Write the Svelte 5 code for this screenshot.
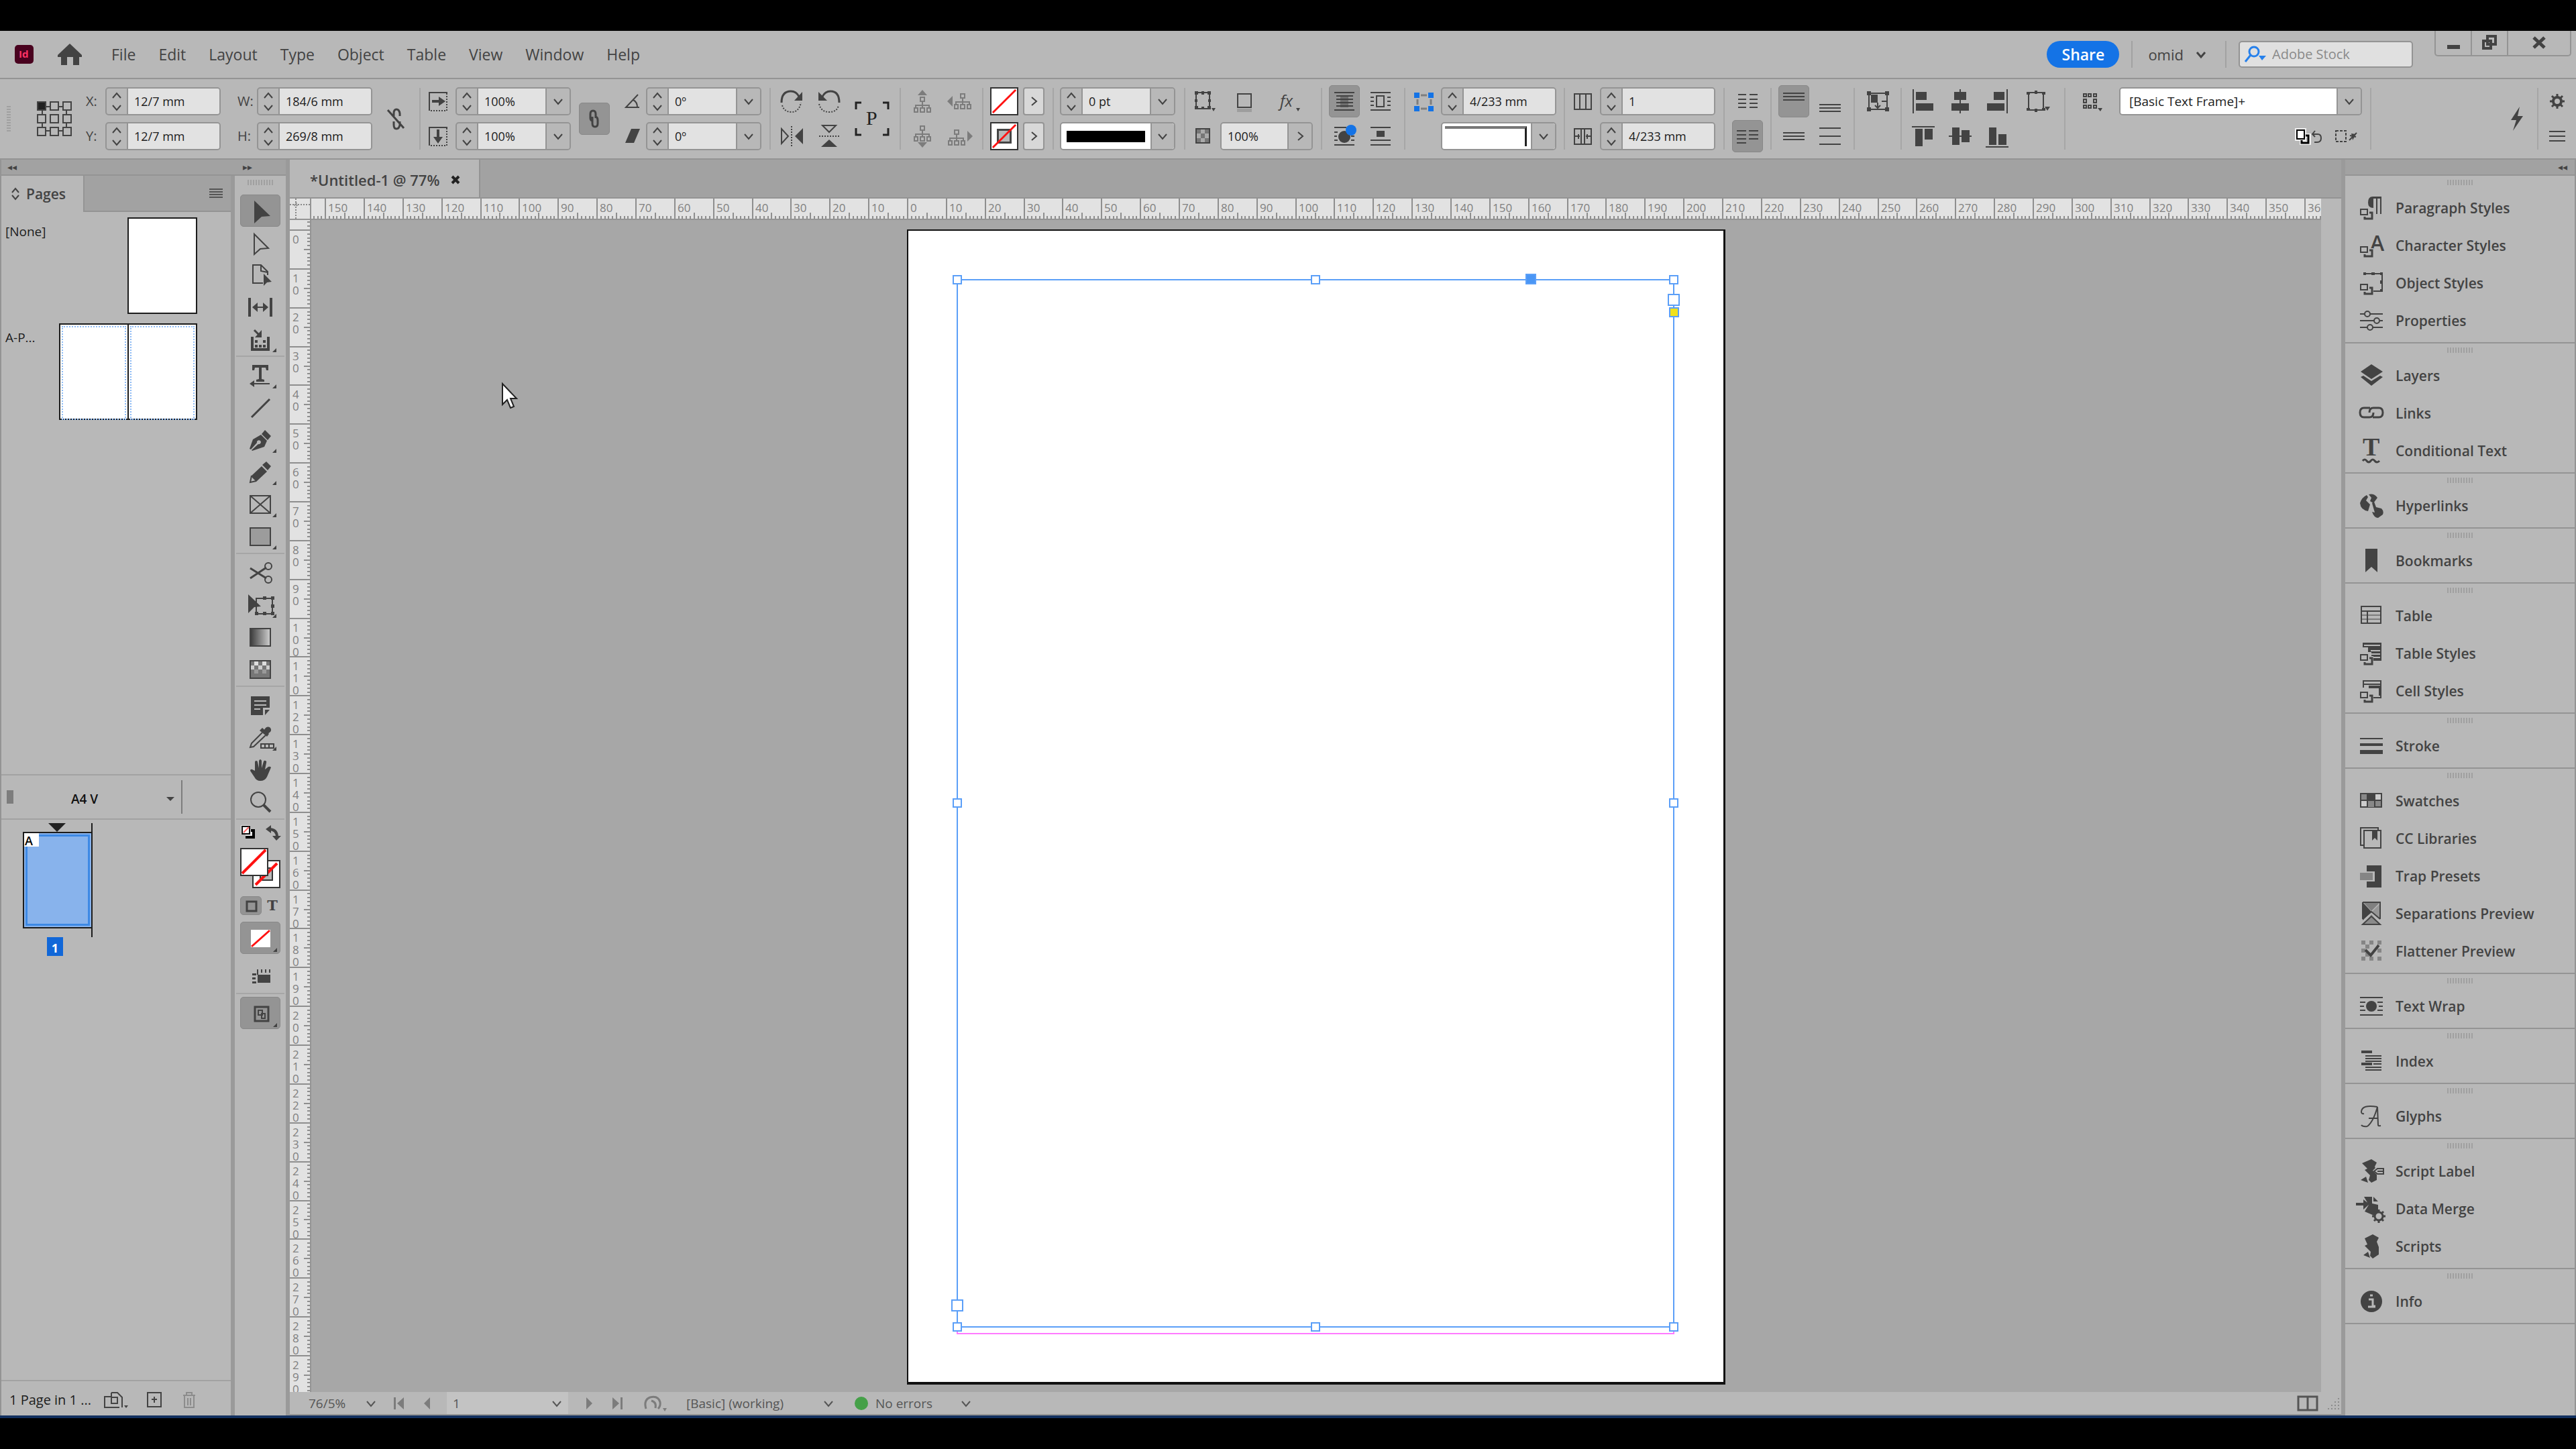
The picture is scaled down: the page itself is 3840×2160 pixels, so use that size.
<script>
  const MM = 5.786;
  const PAGE_BOX = 1220;

  let canvasW = $state(2996);
  let canvasH = $state(1748);

  const originX = $derived(Math.round((canvasW - PAGE_BOX) / 2) + 1);
  const originY = 15;

  function ticks(origin, size) {
    const out = [];
    for (let n = Math.ceil(-origin / MM); origin + n * MM < size + 2; n++) {
      out.push({ n, at: Math.round(origin + n * MM) });
    }
    return out;
  }

  const start = (n) => (n % 10 === 0 ? 0 : n % 5 === 0 ? 21 : 26);
  const hTicks = $derived(ticks(originX, canvasW));
  const vTicks = $derived(ticks(originY, canvasH));
  const hPath = $derived(hTicks.map((t) => `M${t.at} ${start(t.n)}V30`).join(''));
  const vPath = $derived(vTicks.map((t) => `M${start(t.n)} ${t.at}H30`).join(''));

  const menus = ['File', 'Edit', 'Layout', 'Type', 'Object', 'Table', 'View', 'Window', 'Help'];

  const line = (d, w = 2, extra = '') => `<path d="${d}" fill="none" stroke="currentColor" stroke-width="${w}" ${extra}/>`;
  const solid = (d, extra = '') => `<path d="${d}" ${extra}/>`;
  const letter = (t, x, y, size, extra = '') => `<text x="${x}" y="${y}" font-size="${size}" ${extra}>${t}</text>`;
  const SERIF = 'font-family="Liberation Serif, serif" font-weight="700"';
  const dots = 'stroke-dasharray="2 2"';

  const badge = solid('M2 19h14v5h7v14H8v-6H2z', 'fill="#b8b8b8"')
    + line('M4 22h10v8H4z') + line('M17 27h4v9H10v-3', 3);
  const tree = (x, y) => line(`M${x} ${y + 7}v10M${x - 10} ${y + 17}v-5h20v5`)
    + line(`M${x - 3} ${y}h6v6h-6zM${x - 12} ${y + 16}h5v6h-5zM${x - 3} ${y + 16}h6v6h-6zM${x + 7} ${y + 16}h5v6h-5z`);

  // drawn in 60 x 48 cells
  const tools = [
    [
      { name: 'Selection Tool', on: true, art: solid('M20 8L44 31 31 32 20 42z') },
      { name: 'Direct Selection Tool', art: line('M21 11L42 32 30 33 21 41z') },
      { name: 'Page Tool', art: line('M34 36H19V9h12l10 10v5M31 9v9l10 2') + solid('M35 22l12 12-7 1-5 5z') },
      { name: 'Gap Tool', art: line('M14 10v28M46 10v28', 4) + line('M22 24h16') + solid('M18 24l8-7v14zM42 24l-8-7v14z') },
      { name: 'Content Collector Tool', more: true, art: line('M18 20v19h24V20', 4) + solid('M22 25h4v4h-4zM34 25h4v4h-4zM22 32h4v4h-4zM28 32h4v4h-4zM34 32h4v4h-4z') + line('M21 10l7 7', 3) + solid('M32 21V10L22 21z') }
    ],
    [
      { name: 'Type Tool', more: true, art: solid('M18 8h24v8h-3l-1-4h-6v17l4 1v3H24v-3l4-1V12h-6l-1 4h-3z') + line('M18 36h26') + solid('M14 36l7-5v10z') },
      { name: 'Line Tool', art: line('M17 38L44 11', 3) },
      { name: 'Pen Tool', more: true, art: solid('M37 9l9 9-5 6-9-9zM31 16l9 9-4 9-18 6-1-1 10-9a3 3 0 1 0-2-2L16 38l-2-1 5-14z') },
      { name: 'Pencil Tool', more: true, art: solid('M39 8l7 7-5 6-8-8zM32 15l8 8-16 15-8-8z') + line('M17 29l-2 10 9-2') },
      { name: 'Rectangle Frame Tool', more: true, art: line('M15 11h30v26H15z') + line('M15 11l30 26M45 11L15 37') },
      { name: 'Rectangle Tool', more: true, art: '<rect x="15" y="11" width="30" height="26" fill="#9c9c9c" stroke="currentColor" stroke-width="2"/>' }
    ],
    [
      { name: 'Scissors Tool', art: line('M15 17l24 15M15 32l24-16', 3) + '<circle cx="42" cy="14" r="5" fill="none" stroke="currentColor" stroke-width="2"/><circle cx="42" cy="34" r="5" fill="none" stroke="currentColor" stroke-width="2"/>' },
      { name: 'Free Transform Tool', more: true, art: line('M24 14h24v23H24z') + solid('M12 8l19 18-10 1-9 9zM34 11h5v5h-5zM46 11h5v5h-5zM46 23h5v5h-5zM46 34h5v5h-5zM34 34h5v5h-5zM22 34h5v5h-5z') },
      { name: 'Gradient Swatch Tool', art: '<rect x="15" y="11" width="30" height="26" fill="url(#fade)" stroke="currentColor" stroke-width="2"/>' },
      { name: 'Gradient Feather Tool', art: '<rect x="15" y="11" width="30" height="26" fill="#777" stroke="currentColor" stroke-width="2"/>' + solid('M21 12h6v6h-6zM33 12h6v6h-6z', 'fill="#ddd"') + solid('M16 18h5v6h-5zM27 18h6v6h-6zM39 18h5v6h-5z', 'fill="#ccc"') + solid('M21 24h6v6h-6zM33 24h6v6h-6z', 'fill="#999"') }
    ],
    [
      { name: 'Note Tool', art: solid('M16 10h28v17H34v11H16zM37 30h7l-7 8z') + '<path d="M21 17h18M21 23h18M21 29h9" stroke="#b8b8b8" stroke-width="2"/>' },
      { name: 'Eyedropper Tool', more: true, art: line('M33 16L17 32l-2 6 5-1 18-17') + solid('M33 9l10 9-3 4-11-9zM38 9a4 4 0 0 1 7 6l-4 3-6-5z') + line('M31 33h19v6H31zM37 33v6M43 33v6') },
      { name: 'Hand Tool', art: solid('M22 25V12q0-2 2-2t2 2l2 9V10q1-2 2-2t2 2v11l3-10q1-2 3-1t1 3l-2 10 5-4q3-1 4 1L40 34q-3 6-10 6-6 0-9-6l-6-9q0-3 3-2z') },
      { name: 'Zoom Tool', art: '<circle cx="27" cy="20" r="11" fill="none" stroke="currentColor" stroke-width="2"/>' + line('M35 28l10 10', 4) }
    ]
  ];

  // drawn in 40 x 40 cells
  const panels = [
    [
      { name: 'Paragraph Styles', art: solid('M22 3h13v3H23v14q-8 0-8-8 0-9 7-9z') + line('M28 4v25M34 4v25') + badge },
      { name: 'Character Styles', art: letter('A', 18, 28, 32) + badge },
      { name: 'Object Styles', art: line('M10 6h26v26H16') + solid('M8 4h4v4H8zM20 4h5v4h-5zM33 4h4v4h-4zM33 16h4v5h-4zM33 29h4v4h-4z') + badge },
      { name: 'Properties', art: line('M3 10h7M18 10h19M3 20h22M33 20h4M3 30h11M22 30h15') + '<g fill="none" stroke="currentColor" stroke-width="2"><circle cx="14" cy="10" r="4"/><circle cx="28" cy="20" r="4"/><circle cx="18" cy="30" r="4"/></g>' }
    ],
    [
      { name: 'Layers', art: solid('M20 3l17 11-17 11L4 14zM4 22l4-2 12 8 13-8 4 2-17 13z') },
      { name: 'Links', art: '<g fill="none" stroke="currentColor" stroke-width="3"><path d="M18 12H9q-6 0-6 7t6 7h8q6 0 6-7"/><path d="M22 26h9q6 0 6-7t-6-7h-8q-6 0-6 7"/></g>' },
      { name: 'Conditional Text', art: letter('T', 7, 27, 38, SERIF) + line('M7 35q3-4 6 0t6 0 6 0 7 0', 3) }
    ],
    [
      { name: 'Hyperlinks', art: solid('M3 16q2-8 10-12l2 3-3 5 6 6-3 10Q4 26 3 16zM16 3q8-2 13 5l-6 8-5-3 2-5zM24 14l3 8 8 2q4 4 2 9l-7 5q-6 0-9-9l4 1-4-14z') }
    ],
    [{ name: 'Bookmarks', art: solid('M11 2h18v35l-9-8-9 8z') }],
    [
      { name: 'Table', art: line('M5 6h29v25H5zM5 13h29M14 13v18') + line('M14 19h20M14 25h20M5 19h9M5 25h9', 1) },
      { name: 'Table Styles', art: solid('M7 4h28v27H20V18h-5V11H7z') + '<path d="M9 8h24M19 16h14M19 21h14M19 26h14" stroke="#b8b8b8" stroke-width="2"/>' + badge },
      { name: 'Cell Styles', art: line('M8 15V5h26v25H20') + line('M8 10h26') + line('M16 14h17v13', 4) + badge }
    ],
    [{ name: 'Stroke', art: line('M3 9h34', 2) + line('M3 18h34', 4) + line('M3 29h34', 6) }],
    [
      { name: 'Swatches', art: '<rect x="4" y="9" width="31" height="20" fill="#ccc" stroke="currentColor" stroke-width="2"/>' + solid('M14 9h11v10H14z') + solid('M5 10h9v9H5zM14 19h11v10H14zM25 19h9v9h-9z', 'fill="#888"') + line('M5 19h30M14 9v20M25 9v20') },
      { name: 'CC Libraries', art: line('M8 30H4V4h26v4M9 8h25v26H9z') + solid('M21 8h8v15l-4-4-4 4z') },
      { name: 'Trap Presets', art: solid('M13 4h22v33H13v-9h12V13H13z') + solid('M3 15h19v11H3z', 'fill="#858585"') },
      { name: 'Separations Preview', art: solid('M7 3l13 14L7 30z') + solid('M9 4h23L20 16z', 'fill="#808080"') + solid('M33 5v24L21 17z', 'fill="#969696"') + solid('M20 21l13 15H8z', 'fill="#8a8a8a"') + line('M7 3h26v25M7 3v25M7 28l13-11 13 11M7 36h26L20 24z') },
      { name: 'Flattener Preview', art: solid('M5 4h6v6H5zM17 4h6v6h-6zM29 4h6v6h-6zM11 10h6v6h-6zM5 16h6v6H5zM29 16h6v6h-6zM11 22h6v6h-6zM5 28h6v6H5zM17 28h6v6h-6zM29 28h6v6h-6z', 'fill="#858585"') + line('M11 18l8 8 12-15', 4) }
    ],
    [{ name: 'Text Wrap', art: line('M3 7h34M3 14h8M29 14h8M3 20h6M31 20h6M3 26h8M29 26h8M3 33h34') + '<circle cx="20" cy="20" r="8"/>' }],
    [{ name: 'Index', art: line('M5 6h16M5 24h16', 4) + line('M11 12h24M11 16h24M11 20h24M23 24h12M11 29h24M11 33h24') }],
    [{ name: 'Glyphs', art: line('M14 35q-7 1-9-2M14 35Q23 28 29 6l1 27q0 2 4 1M29 6Q6 2 5 13q0 4 4 3M16 23h13') }],
    [
      { name: 'Script Label', art: solid('M6 8l14-6 8 5-3 6 3 8v12l-8 4-4-4 2-7-8-8 4-2zM4 33l8-5 3 9z') + solid('M22 19l6-6h12v12H28z', 'fill="#b8b8b8"') + line('M24 20l5-4h9v8h-9zM29 20h9') },
      { name: 'Data Merge', art: line('M-3 13h12', 4) + solid('M8 6l9 7-9 8zM9 2h12v10l9 2v12l-6 4-14-6 6-10zM23 2l7 7h-7z') + '<circle cx="31" cy="31" r="6" fill="#b8b8b8" stroke="currentColor" stroke-width="3"/>' + line('M31 21v4M31 37v4M21 31h4M37 31h4M24 24l3 3M35 35l3 3M38 24l-3 3M27 35l-3 3', 3) },
      { name: 'Scripts', art: solid('M10 8l12-6 9 5-3 6 3 8v11l-9 6-4-4 1-6-9-9 4-2zM8 33l7-5 3 9z') }
    ],
    [{ name: 'Info', art: '<circle cx="20" cy="20" r="16"/><path d="M16 17h6v10h4M15 28h11M18 11h4" fill="none" stroke="#b8b8b8" stroke-width="3"/>' }]
  ];

  const ctl = {
    scaleX: line('M34 7H7v27') + line('M33 8v26H8', 2, dots) + line('M11 20h12', 4) + solid('M21 13l10 7-10 7z'),
    scaleY: line('M34 7H7v27') + line('M33 8v26H8', 2, dots) + line('M20 10v13', 4) + solid('M13 21l7 10 7-10z'),
    angle: line('M29 10L11 29h20M22 18q6 3 6 11'),
    shear: solid('M19 9h13l-9 21H10z'),
    cw: line('M4 22Q4 5 18 5q8 0 12 8', 3) + solid('M35 6v13H23z') + line('M5 26q3 10 14 10t14-14', 2, dots),
    ccw: line('M35 22Q35 5 22 5q-8 0-12 8', 3) + solid('M4 6v13h13z') + line('M5 24q3 12 15 12t14-10', 2, dots),
    flipH: line('M4 9v22l10-11z') + solid('M36 8v24L24 20z') + line('M19 5v31', 2, dots),
    flipV: line('M10 4h20L20 14z') + solid('M8 36h24L20 25z') + line('M5 20h31', 2, dots),
    upTree: solid('M20 3l7 8H13z') + tree(20, 14),
    downTree: tree(20, 5) + solid('M20 37l7-8H13z'),
    leftTree: solid('M2 20l8-8v16z') + tree(25, 9),
    rightTree: tree(16, 11) + solid('M40 20l-8-8v16z'),
    corner: line('M10 7h20v24H10z') + solid('M8 5h5v5H8zM18 5h4v5h-4zM27 5h5v5h-5zM8 17h4v4H8zM28 17h4v4h-4zM8 27h5v5H8zM18 28h4v4h-4zM27 27h5v5h-5zM33 30h6l-3 5z'),
    shadow: line('M10 9h20v20H10z') + solid('M9 31h22v5H9z', 'fill="#9d9d9d"'),
    fx: letter('fx', 4, 28, 24, 'font-style="italic"') + solid('M28 30h6l-3 5z'),
    opacity: '<rect x="10" y="9" width="20" height="21" fill="#aaa" stroke="currentColor" stroke-width="2"/>' + solid('M11 10h6v6h-6zM23 10h6v6h-6zM17 16h6v7h-6zM11 23h6v6h-6zM23 23h6v6h-6z', 'fill="#777"'),
    wrapNone: line('M5 7h30M5 33h30M8 12h25M8 17h25M8 22h25M8 27h25') + solid('M14 11h12v18H14z', 'opacity=".45"'),
    wrapBox: line('M5 7h30M5 33h30M5 14h5M5 20h5M5 26h5M30 14h5M30 20h5M30 26h5') + line('M14 12h11v16H14z'),
    wrapShape: line('M5 7h18M5 14h5M5 20h4M5 26h5M30 20h5M30 26h5M5 33h30') + '<circle cx="20" cy="21" r="9"/><circle cx="30" cy="11" r="8" fill="#1473e6"/>',
    wrapJump: line('M5 7h30M5 26h30M5 33h30') + solid('M14 12h12v9H14z'),
    corners: solid('M6 7h8v8H6zM27 7h8v8h-8zM6 27h8v8H6zM27 27h8v8h-8z', 'fill="#1473e6"') + line('M16 11h9M16 31h9M11 17v8M31 17v8', 3, 'opacity=".5"'),
    cols: line('M8 9h25v23H8zM16 9v23M25 9v23'),
    gutter: line('M8 9h25v23H8zM18 9v23M23 9v23M8 20h8M25 20h8M14 17v7M27 17v7'),
    colText: line('M6 10h12M6 17h12M6 23h12M6 29h12M23 10h12M23 17h12M23 23h12M23 29h12'),
    colBal: line('M4 12h14M4 18h14M4 24h14M4 30h14M22 12h14M22 18h14M22 24h14'),
    vTop: line('M4 8h32M4 13h32M4 18h32'),
    vBottom: line('M4 25h32M4 30h32M4 35h32'),
    vMiddle: line('M4 15h32M4 20h32M4 25h32'),
    vJustify: line('M4 8h32M4 20h32M4 32h32'),
    fit: line('M7 8h27v24H7z') + solid('M10 10h10v12H10zM4 5h6v6H4zM31 5h6v6h-6zM4 29h6v6H4zM31 29h6v6h-6z') + line('M20 22v8M26 20h7M16 26l4 4 4-4'),
    alignL: line('M5 2v36') + solid('M9 6h16v12H9zM9 23h26v11H9z'),
    alignC: line('M20 2v36') + solid('M11 6h18v12H11zM7 23h26v11H7z'),
    alignR: line('M35 2v36') + solid('M15 6h16v12H15zM5 23h26v11H5z'),
    alignT: line('M3 6h34') + solid('M8 9h11v26H8zM22 9h12v16H22z'),
    alignM: line('M3 20h34') + solid('M8 7h11v26H8zM22 11h12v18H22z'),
    alignB: line('M3 36h34') + solid('M8 7h11v26H8zM22 17h12v16H22z'),
    bounds: line('M8 7h22v26H8z') + solid('M5 6h5v4H5zM17 4h4v5h-4zM28 6h5v4h-5zM5 30h5v4H5zM17 31h4v5h-4zM28 30h5v4h-5zM32 28h8l-4 6z'),
    objStyle: line('M7 9h4v4H7zM14 9h4v4h-4zM22 9h4v4h-4zM7 17h4v5H7zM22 17h4v5h-4zM7 26h4v4H7zM14 26h4v4h-4zM22 26h4v4h-4z') + solid('M28 30h7l-3 5z'),
    clear: '<g fill="none" stroke="#eee" stroke-width="6"><path d="M2 11h11v13H2zM15 19h5v11H9v-4"/></g><rect x="2" y="11" width="11" height="13" fill="#fff" stroke="#000" stroke-width="2"/><path d="M15 19h4v11H9v-4" fill="none" stroke="#000" stroke-width="3"/>' + line('M25 17h8q5 0 5 6t-6 6h-4M29 12l-4 5 4 4'),
    override: line('M4 12h15v16H4z', 2, 'stroke-dasharray="4 2"') + line('M24 26l11-11M25 19l9 2') + solid('M27 16l7 1-5 9z'),
    bolt: solid('M24 2L11 22h8l-5 16 15-22h-8z'),
    gear: '<circle cx="20" cy="20" r="6" fill="none" stroke="currentColor" stroke-width="4"/>' + line('M20 9v4M20 27v4M9 20h4M27 20h4M12 12l3 3M25 25l3 3M28 12l-3 3M15 25l-3 3', 3),
    menu: line('M8 13h24M8 20h24M8 27h24'),
    unlink: line('M17 16v-4q0-6 4-6t5 6v4M17 24v5q0 6 4 6t5-6v-5M8 7l24 27', 3),
    link: line('M22 19v-6q0-5-4-5t-4 5v6q0 4 4 4M17 17v10q0 5 4 5t4-5v-5q0-4-3-5', 3)
  };

  const aligns = [
    [ctl.alignL, 'Align left edges'], [ctl.alignC, 'Align horizontal centers'], [ctl.alignR, 'Align right edges'], [ctl.bounds, 'Align to'],
    [ctl.alignT, 'Align top edges'], [ctl.alignM, 'Align vertical centers'], [ctl.alignB, 'Align bottom edges']
  ];

  const handles = [[73, 73], [607, 73], [1141, 73], [73, 853], [1141, 853], [73, 1634], [607, 1634], [1141, 1634]];
</script>

{#snippet icon(art)}
  <svg class="ic" viewBox="0 0 40 40" aria-hidden="true">{@html art}</svg>
{/snippet}

{#snippet act(art, label, on = false)}
  <button type="button" class="act" class:on aria-label={label}>{@render icon(art)}</button>
{/snippet}

{#snippet chevron(d = 'M-6 -3L0 4 6 -3')}
  <svg class="chev" viewBox="-8 -8 16 16" aria-hidden="true"><path {d} /></svg>
{/snippet}

{#snippet arrows()}
  <span class="spin">
    <button type="button" aria-label="Increase">{@render chevron('M-6 4L0 -3 6 4')}</button>
    <button type="button" aria-label="Decrease">{@render chevron()}</button>
  </span>
{/snippet}

{#snippet field(id, label, value, drop = false)}
  <div class="field">
    {@render arrows()}
    <input {id} aria-label={label} {value} />
    {#if drop}<button type="button" class="drop" aria-label={`${label} presets`}>{@render chevron()}</button>{/if}
  </div>
{/snippet}

{#snippet slash()}
  <svg viewBox="0 0 40 40" class="slash" aria-hidden="true"><path d="M2 38L38 2" /></svg>
{/snippet}

<div class="screen">
  <div class="app">
    <header class="menubar">
      <svg class="logo" viewBox="0 0 28 28" aria-hidden="true">
        <rect width="28" height="28" rx="5" fill="#49021f" />
        <text x="6" y="19" font-size="15" font-weight="700" fill="#ff3366">Id</text>
      </svg>
      <button type="button" class="home" aria-label="Home">
        <svg viewBox="0 0 36 32"><path d="M18 0L36 17v3h-4v12h-9V20h-9v12H5V20H0v-3z" /></svg>
      </button>
      <nav>
        {#each menus as m}<button type="button">{m}</button>{/each}
      </nav>
      <div class="account">
        <button type="button" class="share">Share</button>
        <button type="button" class="user">omid {@render chevron()}</button>
        <label class="search">
          <svg viewBox="0 0 34 26" aria-hidden="true"><circle cx="15" cy="9" r="7" /><path d="M10 14L2 24" /><path class="tri" d="M22 15h11l-6 7z" /></svg>
          <input type="search" placeholder="Adobe Stock" aria-label="Search Adobe Stock" />
        </label>
        <div class="win">
          <button type="button" aria-label="Minimize"><svg viewBox="0 0 40 30"><path d="M11 18h19v6H11z" /></svg></button>
          <button type="button" aria-label="Restore"><svg viewBox="0 0 40 30"><path d="M17 5h12v12H17zM11 12h11v11H11z" fill="none" stroke="currentColor" stroke-width="4" /></svg></button>
          <button type="button" aria-label="Close" class="close"><svg viewBox="0 0 40 30"><path d="M12 7l16 15M28 7L12 22" stroke="currentColor" stroke-width="5" /></svg></button>
        </div>
      </div>
    </header>

    <section class="control">
      <div class="grp g-pos">
        <span class="vgrip"></span>
        <svg class="ref" viewBox="0 0 52 52" aria-hidden="true">
          <path d="M8 8h36v36H8z" />
          {#each [1, 20, 39] as y}
            {#each [1, 20, 39] as x}<rect {x} {y} width="12" height="12" class:full={x + y === 2} />{/each}
          {/each}
        </svg>
        <label for="px">X:</label>{@render field('px', 'X', '12/7 mm')}
        <label for="pw" class="r">W:</label>{@render field('pw', 'W', '184/6 mm')}
        <div class="tall">{@render act(ctl.unlink, 'Constrain proportions')}</div>
        <label for="py">Y:</label>{@render field('py', 'Y', '12/7 mm')}
        <label for="ph" class="r">H:</label>{@render field('ph', 'H', '269/8 mm')}
      </div>
      <div class="grp g-scale">
        {@render icon(ctl.scaleX)}{@render field('sx', 'Scale X', '100%', true)}
        <div class="tall">{@render act(ctl.link, 'Constrain scaling', true)}</div>
        {@render icon(ctl.angle)}{@render field('rot', 'Rotation', '0º', true)}
        {@render icon(ctl.scaleY)}{@render field('sy', 'Scale Y', '100%', true)}
        {@render icon(ctl.shear)}{@render field('shear', 'Shear', '0º', true)}
      </div>
      <div class="grp g-rot">
        {@render act(ctl.cw, 'Rotate 90° clockwise')}{@render act(ctl.ccw, 'Rotate 90° counter-clockwise')}
        <svg class="pbox tall" viewBox="0 0 52 52" aria-hidden="true">
          <path d="M2 12V2h8M42 2h8v10M50 40v10h-8M10 50H2V40" /><text x="17" y="35" font-size="30">P</text>
        </svg>
        {@render act(ctl.flipH, 'Flip horizontal')}{@render act(ctl.flipV, 'Flip vertical')}
      </div>
      <div class="grp g-tree">
        {@render act(ctl.upTree, 'Select container')}{@render act(ctl.leftTree, 'Select previous object')}
        {@render act(ctl.downTree, 'Select content')}{@render act(ctl.rightTree, 'Select next object')}
      </div>
      <div class="grp g-paint">
        <button type="button" class="paint" aria-label="Fill">{@render slash()}</button>
        <button type="button" class="go" aria-label="Fill options">{@render chevron('M-3 -6L4 0 -3 6')}</button>
        <button type="button" class="paint stroke" aria-label="Stroke">{@render slash()}</button>
        <button type="button" class="go" aria-label="Stroke options">{@render chevron('M-3 -6L4 0 -3 6')}</button>
      </div>
      <div class="grp g-weight">
        {@render field('sw', 'Stroke weight', '0 pt', true)}
        <div class="field white"><span class="stroke-line"></span><button type="button" class="drop" aria-label="Stroke type">{@render chevron()}</button></div>
      </div>
      <div class="grp g-fx">
        {@render act(ctl.corner, 'Corner options')}{@render act(ctl.shadow, 'Drop shadow')}{@render act(ctl.fx, 'Effects')}
        {@render icon(ctl.opacity)}
        <div class="field opacity"><input aria-label="Opacity" value="100%" /><button type="button" class="drop" aria-label="Opacity slider">{@render chevron('M-3 -6L4 0 -3 6')}</button></div>
      </div>
      <div class="grp g-wrap">
        {@render act(ctl.wrapNone, 'No text wrap', true)}{@render act(ctl.wrapBox, 'Wrap around bounding box')}
        {@render act(ctl.wrapShape, 'Wrap around object shape')}{@render act(ctl.wrapJump, 'Jump object')}
      </div>
      <div class="grp g-corner">
        {@render icon(ctl.corners)}{@render field('cr', 'Corner size', '4/233 mm')}
        <span></span>
        <div class="field white"><span class="corner-shape"></span><button type="button" class="drop" aria-label="Corner shape">{@render chevron()}</button></div>
      </div>
      <div class="grp g-cols">
        {@render icon(ctl.cols)}{@render field('nc', 'Columns', '1')}
        {@render icon(ctl.gutter)}{@render field('gut', 'Gutter', '4/233 mm')}
      </div>
      <div class="grp g-bal">
        {@render act(ctl.colText, 'Unbalanced columns')}{@render act(ctl.colBal, 'Balance columns', true)}
      </div>
      <div class="grp g-vert">
        {@render act(ctl.vTop, 'Align top', true)}{@render act(ctl.vBottom, 'Align bottom')}
        {@render act(ctl.vMiddle, 'Align center')}{@render act(ctl.vJustify, 'Justify vertically')}
      </div>
      <div class="grp g-fit">{@render act(ctl.fit, 'Auto-fit')}</div>
      <div class="grp g-align">
        {#each aligns as [art, label]}{@render act(art, label)}{/each}
      </div>
      <div class="grp g-style">
        {@render act(ctl.objStyle, 'Object style options')}
        <div class="field select">
          <select aria-label="Object style"><option>[Basic Text Frame]+</option></select>
          <span class="drop">{@render chevron()}</span>
        </div>
        <div class="clear">
          {@render act(ctl.clear, 'Clear overrides')}{@render act(ctl.override, 'Clear attributes')}
        </div>
      </div>
      <div class="grp g-end">
        <div class="tall">{@render act(ctl.bolt, 'Quick apply')}</div>
      </div>
      <div class="grp g-last">
        {@render act(ctl.gear, 'Customize control panel')}{@render act(ctl.menu, 'Panel menu')}
      </div>
    </section>

    <main>
      <aside class="left">
        <div class="strip"><button type="button" aria-label="Collapse panels">◂◂</button><button type="button" aria-label="Expand tools">▸▸</button></div>
        <div class="docks">
          <section class="pages">
            <div class="tabs">
              <button type="button" class="tab">
                <svg viewBox="0 0 12 20" aria-hidden="true"><path d="M1 8l5-6 5 6M1 12l5 6 5-6" /></svg>Pages
              </button>
              <button type="button" class="burger" aria-label="Pages menu"></button>
            </div>
            <div class="masters">
              <div class="master"><span>[None]</span><div class="thumb"></div></div>
              <div class="master"><span>A-P...</span><div class="thumb dotted"></div><div class="thumb dotted second"></div></div>
            </div>
            <div class="sizebar">
              <i></i><button type="button">A4 V</button><b></b>
            </div>
            <div class="sheet">
              <div class="spread">
                <span class="marker"></span>
                <div class="current"><span>A</span></div>
                <span class="num">1</span>
              </div>
            </div>
            <footer>
              <span>1 Page in 1 ...</span>
              <button type="button" aria-label="Edit page size"><svg viewBox="0 0 36 26"><path d="M11 8H2v16h22M12 2h9l7 7v15M12 2v16h9V9h-9" /><path class="f" d="M31 21h6l-3 4z" /></svg></button>
              <button type="button" aria-label="New page"><svg viewBox="0 0 24 26"><path d="M2 2h20v21H2zM12 8v9M8 12h8" /></svg></button>
              <button type="button" class="dim" aria-label="Delete page"><svg viewBox="0 0 24 26"><path d="M3 6h18M8 6V2h8v4M5 7v17h14V7M10 10v11M14 10v11" /></svg></button>
            </footer>
          </section>

          <section class="tools">
            <span class="grip"></span>
            {#each tools as set}
              <div class="set">
                {#each set as t}
                  <button type="button" class="tool" class:on={t.on} aria-label={t.name}>
                    <svg viewBox="0 0 60 48" aria-hidden="true">
                      {#if t.name === 'Gradient Swatch Tool'}
                        <defs><linearGradient id="fade"><stop stop-color="#3a3a3a" /><stop offset="1" stop-color="#d0d0d0" /></linearGradient></defs>
                      {/if}
                      {@html t.art}
                      {#if t.more}<path d="M54 37v6h-6z" />{/if}
                    </svg>
                  </button>
                {/each}
              </div>
            {/each}
            <div class="set last">
              <svg class="swap" viewBox="0 0 60 32" aria-hidden="true">
                <path d="M1 4h14v6h7v14H8v-6H1z" fill="#e8e8e8" />
                <path d="M10 20v2h10V12h-4" fill="none" stroke="#000" stroke-width="4" />
                <rect x="3" y="6" width="11" height="11" fill="#fff" stroke="#111" stroke-width="2" />
                <path d="M5 15l8-8" stroke="#f66" stroke-width="2" />
                <path d="M43 10q12 0 12 12" fill="none" stroke="currentColor" stroke-width="4" />
                <path d="M38 10l8-6v12zM48 20h13l-7 7z" />
              </svg>
              <svg class="colors" viewBox="0 0 60 60" aria-hidden="true">
                <path d="M19 19h40v40H19z" fill="#fff" stroke="#333" stroke-width="2" />
                <path d="M30 30h18v18H30z" fill="#b8b8b8" stroke="#333" stroke-width="2" />
                <path d="M23 55l32-32" stroke="#f11" stroke-width="4" />
                <path d="M1 1h40v40H1z" fill="#fff" stroke="#333" stroke-width="2" />
                <path d="M3 38L38 3" stroke="#f11" stroke-width="4" />
              </svg>
              <div class="affects">
                <button type="button" class="on" aria-label="Formatting affects container"><svg viewBox="0 0 32 28"><path d="M9 7h14v14H9z" fill="none" stroke="currentColor" stroke-width="3" /></svg></button>
                <button type="button" aria-label="Formatting affects text">T</button>
              </div>
              <button type="button" class="tool on" aria-label="Apply none">
                <svg viewBox="0 0 60 48"><path d="M15 11h29v26H15z" fill="#fff" /><path d="M16 36L43 12" stroke="#f11" stroke-width="3" /><path d="M54 38v6h-6z" /></svg>
              </button>
              <button type="button" class="tool" aria-label="View options">
                <svg viewBox="0 0 60 48"><path d="M26 21h19v12H26zM25 13h2v8h-2zM31 13h2v5h-2zM37 13h2v5h-2zM43 13h2v5h-2zM18 19h6v3h-6zM18 25h5v3h-5zM18 31h6v3h-6z" /></svg>
              </button>
            </div>
            <button type="button" class="tool on" aria-label="Screen mode">
              <svg viewBox="0 0 60 48"><path d="M21 14h20v21H21z" fill="none" stroke="currentColor" stroke-width="3" /><path d="M26 19h6v7h-6zM31 24h5v7h-5z" fill="none" stroke="currentColor" stroke-width="2" /><path d="M54 38v6h-6z" /></svg>
            </button>
          </section>
        </div>
      </aside>

      <section class="document">
        <div class="doctabs">
          <div class="doctab"><span>*Untitled-1 @ 77%</span><button type="button" aria-label="Close document"><svg viewBox="0 0 12 12"><path d="M1 1l10 10M11 1L1 11" /></svg></button></div>
        </div>
        <div class="view">
          <svg class="zero" viewBox="0 0 30 30" aria-hidden="true"><path d="M9 0v30M0 9h30" /><circle cx="9" cy="9" r="2" /></svg>
          <svg class="ruler h" aria-hidden="true">
            <path d={hPath} />
            {#each hTicks.filter((t) => t.n % 10 === 0) as t}<text x={t.at + 4} y="20">{Math.abs(t.n)}</text>{/each}
          </svg>
          <div class="scroll"></div>
          <svg class="ruler v" aria-hidden="true">
            <path d={vPath} />
            {#each vTicks.filter((t) => t.n % 10 === 0 && t.n >= 0) as t}
              {#each String(t.n) as digit, i}<text x="4" y={t.at + 20 + i * 18}>{digit}</text>{/each}
            {/each}
          </svg>
          <div class="canvas" bind:clientWidth={canvasW} bind:clientHeight={canvasH}>
            <div class="page">
              <svg viewBox="0 0 1215 1716" aria-hidden="true">
                <path d="M73 1634v10H1141v-10" class="margin" />
                <path d="M73 73H1141V1634H73z" />
                {#each handles as [x, y]}
                  <rect x={x - 6} y={y - 6} width="12" height="12" class="handle" />
                {/each}
                <rect x="65" y="1594" width="16" height="16" class="handle" />
                <rect x="1133" y="95" width="16" height="16" class="handle" />
                <rect x="1135" y="115" width="13" height="13" class="handle yellow" />
                <rect x="921" y="65" width="14" height="14" class="handle full" />
              </svg>
            </div>
            <svg class="cursor" viewBox="0 0 24 40" aria-hidden="true"><path d="M2 2v31l7-7 5 12 5-2-5-12h9z" /></svg>
          </div>
        </div>
        <footer class="status">
          <div class="zoom"><span>76/5%</span>{@render chevron()}</div>
          <button type="button" aria-label="First page"><svg viewBox="0 0 18 20"><path d="M1 1h3v18H1zM16 1v18L6 10z" /></svg></button>
          <button type="button" class="prev" aria-label="Previous page"><svg viewBox="0 0 18 20"><path d="M13 1v18L4 10z" /></svg></button>
          <div class="pageno"><input aria-label="Page" value="1" />{@render chevron()}</div>
          <button type="button" aria-label="Next page"><svg viewBox="0 0 18 20"><path d="M5 1v18l9-9z" /></svg></button>
          <button type="button" class="end" aria-label="Last page"><svg viewBox="0 0 18 20"><path d="M14 1h3v18h-3zM2 1v18l10-9z" /></svg></button>
          <svg class="openwith" viewBox="0 0 36 26" aria-hidden="true"><path d="M4 21Q0 8 10 4q12-3 15 7 1 6-3 10M12 9q8 2 6 11" fill="none" stroke="currentColor" stroke-width="3" /><path d="M29 20h6l-3 5z" /></svg>
          <div class="profile"><span>[Basic] (working)</span>{@render chevron()}</div>
          <div class="errors"><i></i><span>No errors</span>{@render chevron()}</div>
          <button type="button" class="split" aria-label="Split layout"><svg viewBox="0 0 32 24"><path d="M2 2h28v20H2zM16 2v20" fill="none" stroke="currentColor" stroke-width="3" /></svg></button>
          <svg class="sizer" viewBox="0 0 20 20" aria-hidden="true"><path d="M18 2v18M13 7v13M8 12v8M3 17v3" /></svg>
        </footer>
      </section>

      <aside class="right">
        <div class="strip"><button type="button" aria-label="Expand panels">◂◂</button></div>
        {#each panels as group}
          <div class="group">
            <span class="grip"></span>
            {#each group as p}
              <button type="button">{@render icon(p.art)}<span>{p.name}</span></button>
            {/each}
          </div>
        {/each}
      </aside>
    </main>
  </div>
</div>

<style>
  :global(body) {
    background: #000;
  }
  .screen {
    --panel: #b8b8b8;
    --dark: #a2a2a2;
    --edge: #949494;
    --ink: #434343;
    box-sizing: border-box;
    display: flex;
    flex-direction: column;
    min-height: 100vh;
    padding: 46px 0;
    background: #000;
    color: var(--ink);
    font-family: "Open Sans", "Noto Sans", sans-serif;
    font-size: 18px;
    line-height: 24px;
  }
  .screen :global(*) {
    box-sizing: border-box;
  }
  button, input, select {
    margin: 0;
    padding: 0;
    border: 0;
    background: none;
    color: inherit;
    font: inherit;
    min-width: 0;
  }
  svg {
    display: block;
    fill: currentColor;
    overflow: visible;
  }
  .app {
    flex: 1;
    display: flex;
    flex-direction: column;
    background: var(--panel);
    border-bottom: 4px solid #12305f;
  }

  .menubar {
    display: flex;
    align-items: center;
    height: 70px;
    padding-left: 22px;
    font-size: 23px;
  }
  .logo {
    width: 28px;
    height: 28px;
  }
  .home {
    width: 36px;
    margin: 0 44px 0 36px;
  }
  nav {
    display: flex;
    gap: 34px;
  }
  .account {
    display: flex;
    align-items: center;
    align-self: stretch;
    margin-left: auto;
  }
  .share {
    width: 108px;
    height: 40px;
    border-radius: 20px;
    background: #1473e6;
    color: #fff;
    font-weight: 600;
    font-size: 23px;
  }
  .user {
    display: flex;
    align-items: center;
    gap: 18px;
    height: 40px;
    margin: 0 18px;
    padding: 0 28px 0 23px;
    border: solid var(--dark);
    border-width: 0 2px;
    font-size: 22px;
  }
  .user .chev {
    stroke-width: 3;
  }
  .search {
    display: flex;
    align-items: center;
    gap: 8px;
    width: 260px;
    height: 40px;
    padding-left: 6px;
    border: 2px solid var(--edge);
    border-radius: 5px;
    background: #e0e0e0;
  }
  .search svg {
    flex: none;
    width: 34px;
    fill: none;
    stroke: #2680eb;
    stroke-width: 3;
  }
  .search .tri {
    fill: #2680eb;
    stroke: none;
  }
  .search input {
    flex: 1;
    font-size: 20px;
  }
  .search input::placeholder {
    color: #8a8a8a;
    opacity: 1;
  }
  .win {
    display: flex;
    align-self: flex-start;
    margin: 0 7px 0 32px;
    border: 2px solid var(--edge);
    border-top: 0;
    border-radius: 0 0 5px 5px;
  }
  .win button {
    display: grid;
    place-items: center;
    width: 54px;
    height: 36px;
    border-right: 2px solid var(--edge);
  }
  .win .close {
    width: 92px;
    border: 0;
  }
  .win svg {
    width: 40px;
  }

  .control {
    display: flex;
    height: 122px;
    padding: 13px 0;
    border: solid var(--edge);
    border-width: 2px 0;
  }
  .grp {
    display: grid;
    grid-template-rows: 40px 40px;
    gap: 12px 0;
    align-items: center;
    justify-items: center;
    height: 92px;
    border-right: 2px solid #a6a6a6;
  }
  .tall, .vgrip, .ref {
    grid-row: 1 / 3;
  }
  .g-pos { grid-template-columns: 36px 90px 31px 172px 54px 172px 70px; }
  .g-pos .tall { grid-column: 7; }
  .g-pos label {
    justify-self: start;
    padding-left: 2px;
    font-size: 20px;
  }
  .g-pos .r {
    padding-left: 25px;
  }
  .g-scale { grid-template-columns: 52px 172px 70px 42px 172px; padding-right: 12px; }
  .g-rot { grid-template-columns: 64px 46px 82px; }
  .g-scale .tall, .g-rot .tall { grid-column: 3; }
  .g-tree { grid-template-columns: 64px 46px; padding-right: 11px; color: #7c7c7c; }
  .g-paint { grid-template-columns: 42px 32px; gap: 12px 7px; padding: 0 12px 0 10px; }
  .g-weight { grid-template-columns: 172px; padding: 0 13px 0 9px; }
  .g-fx { grid-template-columns: 52px 72px 66px; padding-right: 12px; }
  .g-wrap { grid-template-columns: 66px 42px; padding-right: 14px; }
  .g-corner { grid-template-columns: 53px 172px; padding-right: 11px; }
  .g-cols { grid-template-columns: 52px 172px; padding-right: 12px; }
  .g-bal { grid-template-columns: 68px; }
  .g-vert { grid-template-columns: 66px 42px; padding-right: 14px; }
  .g-fit { grid-template-columns: 68px; }
  .g-align { grid-template-columns: 64px 46px 64px 54px; padding-right: 14px; }
  .g-style { grid-template-columns: 80px 362px; padding-right: 12px; }
  .g-end { grid-template-columns: 60px; margin-left: auto; }
  .g-last { grid-template-columns: 56px; border-right: 0; }

  .ic {
    width: 40px;
    height: 40px;
  }
  .act {
    display: grid;
    place-items: center;
    width: 46px;
    height: 48px;
    border: 1px solid transparent;
    border-radius: 5px;
  }
  .on {
    border: 1px solid #888;
    background: #949494;
  }
  .vgrip {
    justify-self: start;
    width: 6px;
    height: 38px;
    margin-left: 10px;
    background: repeating-linear-gradient(#a0a0a0 0 2px, transparent 2px 4px);
  }
  .ref {
    width: 52px;
    fill: var(--panel);
    stroke: var(--ink);
    stroke-width: 2;
  }
  .ref .full {
    fill: #222;
  }
  .field {
    display: flex;
    width: 172px;
    height: 42px;
    border: 2px solid var(--edge);
    border-radius: 5px;
    overflow: hidden;
  }
  .field input, .field select {
    flex: 1;
    width: 0;
    padding-left: 9px;
    background: #e2e2e2;
    color: #1c1c1c;
    font-weight: 500;
  }
  .spin {
    display: flex;
    flex-direction: column;
    justify-content: space-evenly;
    align-items: center;
    width: 32px;
    border-right: 2px solid var(--edge);
  }
  .chev {
    flex: none;
    width: 16px;
    height: 16px;
    fill: none;
    stroke: currentColor;
    stroke-width: 2;
  }
  .drop {
    display: grid;
    place-items: center;
    width: 36px;
    border-left: 2px solid var(--edge);
    background: var(--panel);
  }
  .white {
    justify-content: space-between;
    background: #fff;
  }
  .stroke-line {
    width: 120px;
    height: 17px;
    margin: 11px 8px;
    background: #000;
  }
  .corner-shape {
    width: 122px;
    margin: 4px;
    border-top: 4px solid #777;
    border-right: 3px solid #222;
  }
  .opacity {
    grid-column: 2 / 4;
    width: 138px;
  }
  .field.select {
    width: 362px;
  }
  .field select {
    appearance: none;
    padding-left: 13px;
    background: #fff;
    font-size: 19px;
  }
  .clear {
    grid-column: 2;
    grid-row: 2;
    justify-self: end;
    display: flex;
    gap: 10px;
  }
  .pbox {
    width: 52px;
    fill: none;
    stroke: #222;
    stroke-width: 3;
  }
  .pbox text {
    fill: #222;
    stroke: none;
    font-family: "Liberation Serif", serif;
  }
  .paint {
    width: 42px;
    height: 42px;
    border: 2px solid #333;
    background: #fff;
  }
  .slash {
    width: 38px;
    height: 38px;
    stroke: #f11;
    stroke-width: 3;
  }
  .paint.stroke {
    background: linear-gradient(var(--panel) 0 0) center / 16px 16px no-repeat, linear-gradient(#444 0 0) center / 22px 22px no-repeat, #fff;
  }
  .go {
    display: grid;
    place-items: center;
    width: 32px;
    height: 42px;
    border: 2px solid var(--edge);
    border-radius: 4px;
    background: #d8d8d8;
  }

  main {
    flex: 1;
    display: flex;
    min-height: 0;
  }
  .strip {
    display: flex;
    justify-content: space-between;
    height: 24px;
    padding: 0 50px 0 9px;
    background: var(--dark);
    border-bottom: 2px solid var(--edge);
    font-family: "DejaVu Sans", sans-serif;
    font-size: 14px;
    line-height: 20px;
  }
  .left {
    display: flex;
    flex-direction: column;
    width: 426px;
    border-left: 2px solid var(--edge);
  }
  .docks {
    flex: 1;
    display: flex;
  }
  .pages {
    flex: 1;
    display: flex;
    flex-direction: column;
  }
  .tabs {
    display: flex;
    height: 54px;
    background: var(--dark);
  }
  .tab {
    display: flex;
    align-items: center;
    gap: 10px;
    width: 122px;
    padding-left: 15px;
    background: var(--panel);
    font-size: 21px;
    font-weight: 600;
  }
  .tab svg {
    width: 12px;
    fill: none;
    stroke: currentColor;
    stroke-width: 2;
  }
  .burger {
    flex: 1;
    border: solid var(--edge);
    border-width: 0 0 2px 2px;
    background: repeating-linear-gradient(#555 0 2px, transparent 2px 4px) right 12px center / 20px 14px no-repeat;
  }
  .masters {
    flex: 1 1 6px;
    padding: 8px 50px 0 6px;
  }
  .master {
    display: flex;
    margin-bottom: 14px;
    color: #1c1c1c;
    font-size: 19px;
    font-weight: 500;
  }
  .master span {
    flex: 1;
    padding-top: 9px;
  }
  .thumb {
    width: 104px;
    height: 144px;
    border: 2px solid #1c1c1c;
    background: #fff;
  }
  .dotted {
    padding: 2px;
  }
  .dotted::after {
    content: "";
    display: block;
    height: 100%;
    border: 2px dotted #8cbaf5;
  }
  .second {
    margin-left: -2px;
  }
  .sizebar {
    display: flex;
    align-items: center;
    height: 68px;
    padding-left: 8px;
    border: solid var(--dark);
    border-width: 2px 0;
    color: #111;
    font-size: 19px;
    font-weight: 600;
  }
  .sizebar i {
    width: 10px;
    height: 20px;
    background: #7d7d7d;
  }
  .sizebar button {
    display: flex;
    align-items: center;
    justify-content: space-between;
    width: 240px;
    padding: 6px 0 0 86px;
  }
  .sizebar button::after {
    content: "";
    border: 6px solid transparent;
    border-top-color: var(--ink);
    border-bottom: 0;
  }
  .sizebar b {
    width: 2px;
    height: 50px;
    margin-left: 10px;
    background: #7d7d7d;
  }
  .sheet {
    flex: 1;
    padding: 5px 0 0 32px;
  }
  .spread {
    display: flex;
    flex-direction: column;
    width: 104px;
    height: 170px;
    border-right: 2px solid #1c1c1c;
  }
  .marker {
    align-self: center;
    border: 13px solid transparent;
    border-top-color: #222;
    border-bottom: 0;
  }
  .current {
    height: 144px;
    flex: none;
    border: 2px solid #1c1c1c;
    border-right: 0;
    background: #88b3ec;
    box-shadow: inset 0 0 0 2px #88b3ec, inset 0 0 0 5px #3d89e5;
  }
  .current span {
    display: block;
    width: 22px;
    height: 20px;
    padding-left: 1px;
    background: #fff;
    color: #000;
    font-weight: 600;
    line-height: 22px;
  }
  .num {
    flex: none;
    width: 24px;
    height: 28px;
    margin: 13px 0 0 36px;
    background: #1167d8;
    color: #fff;
    font-weight: 700;
    line-height: 32px;
    text-align: center;
  }
  .pages footer {
    display: flex;
    align-items: center;
    height: 53px;
    padding: 5px 0 0 12px;
    border-top: 2px solid var(--dark);
    color: #1c1c1c;
    font-size: 20px;
  }
  .pages footer span {
    width: 140px;
    white-space: nowrap;
  }
  .pages footer button {
    margin-right: 28px;
    color: var(--ink);
  }
  .pages footer .dim {
    color: #8c8c8c;
  }
  .pages footer svg {
    height: 26px;
    fill: none;
    stroke: currentColor;
    stroke-width: 2;
  }
  .pages footer .f {
    fill: currentColor;
    stroke: none;
  }

  .tools {
    display: flex;
    flex-direction: column;
    align-items: center;
    width: 82px;
    border-left: 6px solid #9a9a9a;
  }
  .grip {
    display: block;
    width: 38px;
    height: 8px;
    background: repeating-linear-gradient(90deg, #a0a0a0 0 2px, transparent 2px 4px);
  }
  .tools .grip {
    margin: 6px 0 14px;
  }
  .set {
    display: flex;
    flex-direction: column;
    align-items: center;
    width: 72px;
    margin-bottom: 4px;
    border-bottom: 2px solid #a6a6a6;
  }
  .tool {
    display: grid;
    place-items: center;
    width: 60px;
    height: 48px;
    border-radius: 5px;
  }
  .tool svg {
    width: 60px;
    height: 48px;
  }
  .swap {
    width: 60px;
    height: 32px;
  }
  .colors {
    width: 60px;
    height: 60px;
    margin: 6px 0 12px;
  }
  .affects {
    display: flex;
    width: 60px;
    height: 28px;
    margin-bottom: 10px;
  }
  .affects button {
    display: grid;
    place-items: center;
    flex: 1 0 32px;
    border-radius: 5px;
    font-family: "DejaVu Serif", serif;
    font-weight: 700;
    font-size: 21px;
  }
  .affects svg {
    width: 32px;
  }
  .last .tool + .tool {
    margin-top: 10px;
  }

  .document {
    flex: 1;
    display: flex;
    flex-direction: column;
    min-width: 0;
    border: solid #9a9a9a;
    border-width: 0 6px;
  }
  .doctabs {
    height: 58px;
    background: var(--dark);
    border-bottom: 2px solid var(--edge);
  }
  .doctab {
    display: flex;
    align-items: center;
    gap: 18px;
    width: 284px;
    height: 56px;
    padding: 4px 0 0 30px;
    background: var(--panel);
    border-right: 2px solid var(--edge);
    font-size: 22px;
    font-weight: 600;
  }
  .doctab span {
    white-space: nowrap;
  }
  .doctab svg {
    width: 12px;
    stroke: #222;
    stroke-width: 4;
  }
  .view {
    flex: 1;
    display: grid;
    grid-template: 32px 1fr / 32px 1fr 30px;
  }
  .zero, .ruler {
    width: 100%;
    height: 100%;
    background: #e2e2e2;
    border: 0 solid var(--edge);
    overflow: hidden;
  }
  .zero {
    border-width: 0 2px 2px 0;
    fill: none;
    stroke: #888;
    stroke-width: 2;
    stroke-dasharray: 2 2;
  }
  .ruler path {
    fill: none;
    stroke: #8e8e8e;
    stroke-width: 2;
  }
  .ruler text {
    fill: #808080;
    font-size: 17px;
  }
  .h {
    border-bottom-width: 2px;
  }
  .v {
    height: 0;
    min-height: 100%;
    border-right-width: 2px;
  }
  .scroll {
    grid-row: 1 / 3;
    grid-column: 3;
  }
  .canvas {
    position: relative;
    display: flex;
    justify-content: center;
    align-items: flex-start;
    padding-top: 14px;
    background: #a7a7a7;
  }
  .page {
    border: solid #111;
    border-width: 2px 3px 4px 2px;
    background: #fff;
  }
  .page svg {
    width: 1215px;
    height: 1716px;
    fill: none;
    stroke: #5b9ff8;
    stroke-width: 2;
  }
  .page .margin {
    stroke: #ff7bff;
  }
  .page .handle {
    fill: #fff;
  }
  .page .full {
    fill: #4a96f5;
  }
  .page .yellow {
    fill: #f2e11a;
  }
  .cursor {
    position: absolute;
    left: 283px;
    top: 242px;
    width: 24px;
    height: 40px;
    fill: #fff;
    stroke: #222;
    stroke-width: 2;
  }
  .status {
    display: flex;
    align-items: center;
    height: 35px;
    padding-left: 28px;
    border-bottom: 2px solid var(--edge);
    color: #555;
    font-size: 19px;
  }
  .status button svg {
    width: 18px;
    height: 20px;
  }
  .zoom, .profile, .errors {
    display: flex;
    align-items: center;
    justify-content: space-between;
    width: 101px;
    margin-right: 25px;
    white-space: nowrap;
  }
  .status button {
    color: #7c7c7c;
    margin-right: 24px;
  }
  .status .prev {
    margin-right: 20px;
  }
  .pageno {
    display: flex;
    align-items: center;
    width: 181px;
    height: 33px;
    margin-right: 22px;
    padding: 0 9px;
    background: #c3c3c3;
  }
  .pageno input {
    flex: 1;
    width: 0;
  }
  .status .end {
    margin-right: 30px;
  }
  .openwith {
    width: 36px;
    margin-right: 28px;
    color: #7c7c7c;
  }
  .profile {
    width: 220px;
    margin-right: 31px;
  }
  .errors {
    width: 174px;
    gap: 11px;
  }
  .errors span {
    flex: 1;
  }
  .errors i {
    width: 20px;
    height: 20px;
    border-radius: 50%;
    background: #45a048;
  }
  .status .split {
    margin: 0 12px 0 auto;
    color: #555;
  }
  .status .split svg {
    width: 32px;
    height: 24px;
  }
  .sizer {
    width: 20px;
    margin-right: 2px;
    stroke: #8c8c8c;
    stroke-width: 2;
    stroke-dasharray: 2 3;
  }

  .right {
    width: 344px;
    border-right: 2px solid var(--edge);
  }
  .right .strip {
    justify-content: flex-end;
    padding-right: 11px;
  }
  .group {
    padding: 6px 0 4px;
    border-bottom: 2px solid var(--edge);
  }
  .group .grip {
    margin: 0 auto 6px;
  }
  .group button {
    display: flex;
    align-items: center;
    gap: 16px;
    width: 100%;
    height: 56px;
    padding-left: 19px;
    font-size: 21px;
    font-weight: 600;
    text-align: left;
  }
</style>
